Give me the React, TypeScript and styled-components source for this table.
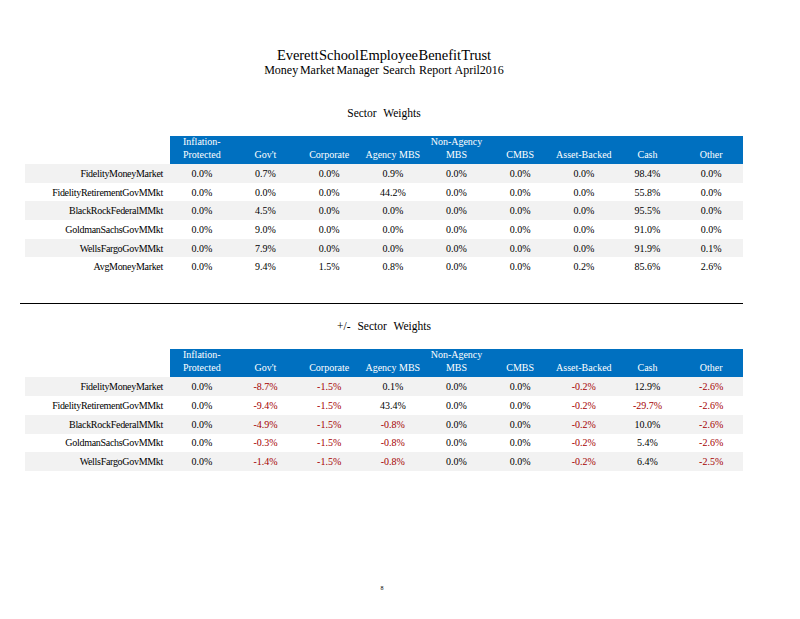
import React from "react";
import styled, { createGlobalStyle } from "styled-components";

const GlobalStyle = createGlobalStyle`
  html, body {
    margin: 0;
    padding: 0;
    background: #ffffff;
  }
  body {
    font-family: "Liberation Serif", "Times New Roman", serif;
    color: #000000;
  }
`;

const Page = styled.div`
  width: 800px;
  height: 619px;
  box-sizing: border-box;
  padding: 47px 0 0 25px;
`;

const Sheet = styled.div`
  width: 718px;
  display: flex;
  flex-direction: column;
`;

const Title = styled.div`
  text-align: center;
  font-size: 14.5px;
  line-height: 16px;
  word-spacing: -3px;
  letter-spacing: -0.05px;
`;

const Subtitle = styled.div`
  text-align: center;
  font-size: 12px;
  line-height: 14px;
  word-spacing: -1.2px;
`;

const SectionTitle = styled.div<{ $top: number }>`
  text-align: center;
  font-size: 11.5px;
  line-height: 14px;
  word-spacing: 4px;
  margin-top: ${(p) => p.$top}px;
`;

const Table = styled.div`
  display: flex;
  flex-direction: column;
  margin-top: 16px;
  font-size: 10px;
`;

const HeaderRow = styled.div`
  display: grid;
  grid-template-columns: 145px repeat(9, 1fr);
  height: 28px;
`;

const HeaderBlank = styled.div`
  background: #ffffff;
`;

const HeaderCell = styled.div`
  background: #0070c0;
  color: #ffffff;
  display: flex;
  align-items: flex-end;
  justify-content: center;
  text-align: center;
  line-height: 12.5px;
  padding-bottom: 3px;
  white-space: pre-line;
`;

const DataRow = styled.div<{ $shaded: boolean; $h: number }>`
  display: grid;
  grid-template-columns: 145px repeat(9, 1fr);
  height: ${(p) => p.$h}px;
  align-items: center;
  background: ${(p) => (p.$shaded ? "#f2f2f2" : "#ffffff")};
`;

const NameCell = styled.div`
  text-align: right;
  padding-right: 7px;
  letter-spacing: -0.3px;
  word-spacing: -2.2px;
  white-space: nowrap;
`;

const ValueCell = styled.div<{ $neg: boolean }>`
  text-align: center;
  color: ${(p) => (p.$neg ? "#a50000" : "#000000")};
`;

const Rule = styled.div`
  height: 1px;
  background: #000000;
  margin: 27px 0 0 -5px;
  width: 723px;
`;

const PageNumber = styled.div`
  text-align: center;
  font-size: 6px;
  line-height: 8px;
  margin-top: 113px;
  padding-right: 4px;
`;

const headers = [
  "Inflation-\nProtected",
  "Gov't",
  "Corporate",
  "Agency MBS",
  "Non-Agency\nMBS",
  "CMBS",
  "Asset-Backed",
  "Cash",
  "Other",
];

type Row = { name: string; values: string[] };

const weights: Row[] = [
  { name: "Fidelity Money Market", values: ["0.0%", "0.7%", "0.0%", "0.9%", "0.0%", "0.0%", "0.0%", "98.4%", "0.0%"] },
  { name: "Fidelity Retirement Gov MMkt", values: ["0.0%", "0.0%", "0.0%", "44.2%", "0.0%", "0.0%", "0.0%", "55.8%", "0.0%"] },
  { name: "BlackRock Federal MMkt", values: ["0.0%", "4.5%", "0.0%", "0.0%", "0.0%", "0.0%", "0.0%", "95.5%", "0.0%"] },
  { name: "Goldman Sachs Gov MMkt", values: ["0.0%", "9.0%", "0.0%", "0.0%", "0.0%", "0.0%", "0.0%", "91.0%", "0.0%"] },
  { name: "Wells Fargo Gov MMkt", values: ["0.0%", "7.9%", "0.0%", "0.0%", "0.0%", "0.0%", "0.0%", "91.9%", "0.1%"] },
  { name: "Avg Money Market", values: ["0.0%", "9.4%", "1.5%", "0.8%", "0.0%", "0.0%", "0.2%", "85.6%", "2.6%"] },
];

const diffs: Row[] = [
  { name: "Fidelity Money Market", values: ["0.0%", "-8.7%", "-1.5%", "0.1%", "0.0%", "0.0%", "-0.2%", "12.9%", "-2.6%"] },
  { name: "Fidelity Retirement Gov MMkt", values: ["0.0%", "-9.4%", "-1.5%", "43.4%", "0.0%", "0.0%", "-0.2%", "-29.7%", "-2.6%"] },
  { name: "BlackRock Federal MMkt", values: ["0.0%", "-4.9%", "-1.5%", "-0.8%", "0.0%", "0.0%", "-0.2%", "10.0%", "-2.6%"] },
  { name: "Goldman Sachs Gov MMkt", values: ["0.0%", "-0.3%", "-1.5%", "-0.8%", "0.0%", "0.0%", "-0.2%", "5.4%", "-2.6%"] },
  { name: "Wells Fargo Gov MMkt", values: ["0.0%", "-1.4%", "-1.5%", "-0.8%", "0.0%", "0.0%", "-0.2%", "6.4%", "-2.5%"] },
];

function DataTable({ rows, rowHeight }: { rows: Row[]; rowHeight: number }) {
  return (
    <Table>
      <HeaderRow>
        <HeaderBlank />
        {headers.map((h) => (
          <HeaderCell key={h}>{h}</HeaderCell>
        ))}
      </HeaderRow>
      {rows.map((r, i) => (
        <DataRow key={r.name} $shaded={i % 2 === 0} $h={rowHeight}>
          <NameCell>{r.name}</NameCell>
          {r.values.map((v, j) => (
            <ValueCell key={j} $neg={v.startsWith("-")}>
              {v}
            </ValueCell>
          ))}
        </DataRow>
      ))}
    </Table>
  );
}

export default function App() {
  return (
    <>
      <GlobalStyle />
      <Page>
        <Sheet>
          <Title>Everett School Employee Benefit Trust</Title>
          <Subtitle>Money Market Manager&nbsp; Search&nbsp; Report&nbsp; April2016</Subtitle>
          <SectionTitle $top={29}>Sector Weights</SectionTitle>
          <DataTable rows={weights} rowHeight={18.7} />
          <Rule />
          <SectionTitle $top={15}>+/- Sector Weights</SectionTitle>
          <DataTable rows={diffs} rowHeight={18.8} />
          <PageNumber>8</PageNumber>
        </Sheet>
      </Page>
    </>
  );
}
